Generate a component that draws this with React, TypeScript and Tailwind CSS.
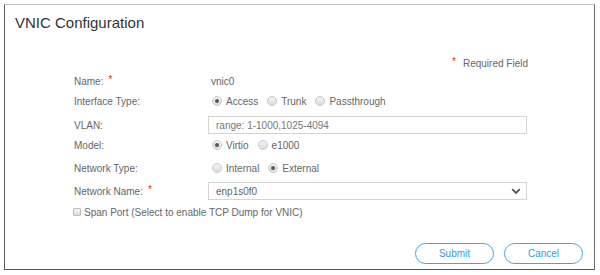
import React from "react";

const Radio = ({ checked, label }: { checked?: boolean; label: string }) => (
  <span className="flex items-center gap-[4px] mr-[9px]">
    <span className="w-[10px] h-[10px] rounded-full border border-[#c8c8c8] bg-gradient-to-b from-[#f4f4f4] to-[#dcdcdc] flex items-center justify-center">
      {checked && <span className="w-[4px] h-[4px] rounded-full bg-[#555]" />}
    </span>
    <span>{label}</span>
  </span>
);

const Row = ({
  label,
  required,
  className,
  children,
}: {
  label: string;
  required?: boolean;
  className?: string;
  children: React.ReactNode;
}) => (
  <div className={"flex items-center h-[20px] " + (className || "")}>
    <div className="w-[134px] shrink-0">
      {label}
      {required && <span className="text-[#e0312f] ml-[5px] relative -top-[2px]">*</span>}
    </div>
    <div className="flex items-center flex-1">{children}</div>
  </div>
);

export default function App() {
  return (
    <div
      className="w-[600px] h-[275px] bg-white pt-[4px] pl-[4px]"
      style={{ fontFamily: '"Liberation Sans", Arial, sans-serif' }}
    >
      <div className="w-[591px] h-[266px] border border-t-[#c4c4c4] border-l-[#5a5a5a] border-r-[#6a6a6a] border-b-[#5a5a5a] text-[10px] text-[#666]">
        <div className="pl-[10px] pt-[9px] text-[15px] leading-[18px] text-[#333]">
          VNIC Configuration
        </div>
        <div className="flex justify-end pr-[66px] mt-[24px] h-[14px] items-center">
          <span className="text-[#e0312f] mr-[7px] relative -top-[2px]">*</span>
          Required Field
        </div>
        <div className="pl-[69px] pr-[67px]">
          <Row label="Name:" required className="mt-[1px]">
            <span className="ml-[3px]">vnic0</span>
          </Row>
          <Row label="Interface Type:">
            <span className="ml-[4px] flex items-center">
              <Radio checked label="Access" />
              <Radio label="Trunk" />
              <Radio label="Passthrough" />
            </span>
          </Row>
          <Row label="VLAN:" className="mt-[4px]">
            <div className="w-full h-[18px] border border-[#d4d4d4] flex items-center px-[7px] text-[#777]">
              range: 1-1000,1025-4094
            </div>
          </Row>
          <Row label="Model:">
            <span className="ml-[4px] flex items-center">
              <Radio checked label="Virtio" />
              <Radio label="e1000" />
            </span>
          </Row>
          <Row label="Network Type:" className="mt-[3px]">
            <span className="ml-[4px] flex items-center">
              <Radio label="Internal" />
              <Radio checked label="External" />
            </span>
          </Row>
          <Row label="Network Name:" required className="mt-[3px]">
            <div className="w-full h-[18px] border border-[#d4d4d4] flex items-center justify-between pl-[7px] pr-[5px]">
              <span>enp1s0f0</span>
              <svg width="10" height="7" viewBox="0 0 10 7">
                <path d="M1.2 1.2 L5 5 L8.8 1.2" fill="none" stroke="#555" strokeWidth="1.8" />
              </svg>
            </div>
          </Row>
          <div className="flex items-center h-[20px] mt-[1px] -ml-[1px]">
            <span className="w-[8px] h-[8px] rounded-[1px] border border-[#bdbdbd] bg-gradient-to-b from-[#f4f4f4] to-[#dcdcdc] mr-[3px]" />
            Span Port (Select to enable TCP Dump for VNIC)
          </div>
        </div>
        <div className="flex justify-end gap-[10px] pr-[11px] mt-[21px]">
          <button className="w-[79px] h-[21px] rounded-full border border-[#3aa9dc] text-[#2d9fd6] text-[10px]">
            Submit
          </button>
          <button className="w-[79px] h-[21px] rounded-full border border-[#3aa9dc] text-[#2d9fd6] text-[10px]">
            Cancel
          </button>
        </div>
      </div>
    </div>
  );
}
